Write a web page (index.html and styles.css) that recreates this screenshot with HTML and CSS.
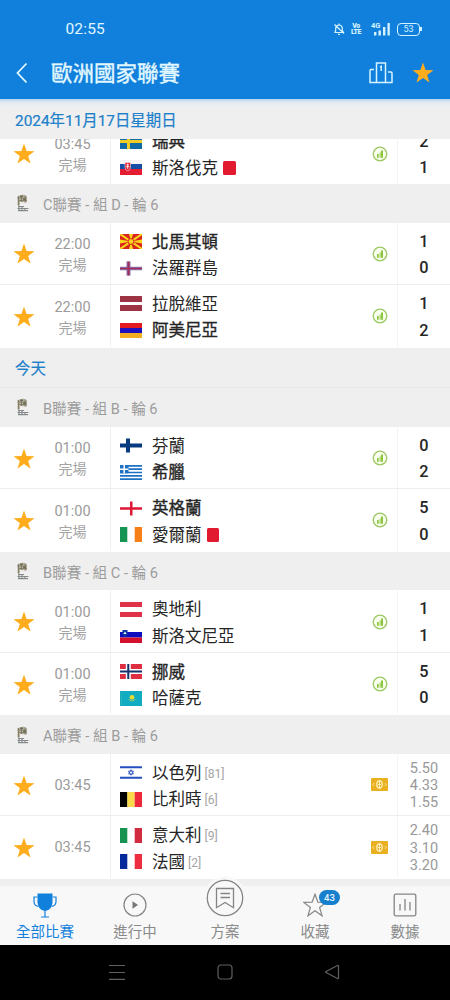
FILE: index.html
```html
<!DOCTYPE html>
<html lang="zh-Hant">
<head>
<meta charset="utf-8">
<title>歐洲國家聯賽</title>
<link rel="stylesheet" href="styles.css">
</head>
<body>
<svg class="defs" aria-hidden="true">
  <symbol id="star" viewBox="0 0 22 22"><path fill="#ffad1c" d="M11 .500l2.600 7.600 7.900.1-6.300 4.700 2.300 7.700L11 16l-6.500 4.600 2.300-7.700L.500 8.200l7.900-.1z"/></symbol>
  <symbol id="stats" viewBox="0 0 16 16"><circle cx="8" cy="8" r="6.800" fill="#f9ffef" stroke="#9cc862" stroke-width="1.300"/><path fill="#8cc63f" d="M5 8h1.700v3.700H5zM7.600 6.600h1v5.100h-1zM9 4.600h2v7.100H9z"/></symbol>
  <symbol id="odds" viewBox="0 0 17 13"><rect width="17" height="13" rx="1" fill="#e9b01f"/><ellipse cx="8.500" cy="6.500" rx="2.700" ry="3.700" fill="none" stroke="#fff2c4" stroke-width="1.300"/><path d="M8.500 2v9M7 6.500h3M3 5.200L1.800 6.500 3 7.800M14 5.200l1.200 1.300L14 7.800" fill="none" stroke="#fff2c4" stroke-width=".9"/></symbol>
  <symbol id="league" viewBox="0 0 12 18"><path fill="#b9b29c" d="M.5 2l6-1.500 3.500 1.700V8.500L3 8v3.500H.5z"/><path d="M.5 4h9M2 6.500h8M4.500 1.500v6.500M8 1.500v7M1.500 2v9.500" stroke="#7d7966" stroke-width=".9"/><path d="M1 12.500h6M.5 14.500h11M1 16.700h10M2 12v5M5 13v4M8 14v3" stroke="#868a8c" stroke-width="1.200"/><path d="M3 2.200h3M6 5.200h3" stroke="#565844"/></symbol>

  <symbol id="se" viewBox="0 0 22 15"><path fill="#126ba4" d="M0 0h22v15H0z"/><path fill="#f2cd28" d="M7 0h3v15H7zM0 6h22v3H0z"/></symbol>
  <symbol id="sk" viewBox="0 0 22 15"><path fill="#f5f5f8" d="M0 0h22v15H0z"/><path fill="#174fa7" d="M0 4h22v6H0z"/><path fill="#e41d32" d="M0 9h22v6H0z"/><path fill="#e41d32" stroke="#fff" stroke-width=".5" d="M5 2.500h5.500v5q0 2.500-2.700 3.500Q5 10 5 7.500z"/><path stroke="#fff" stroke-width=".8" d="M7.700 3.500v5.500M6.500 4.800H9M6 6.700h3.500"/></symbol>
  <symbol id="mk" viewBox="0 0 22 15"><path fill="#d9241d" d="M0 0h22v15H0z"/><path stroke="#f9d51c" stroke-width="2" d="M0 0l22 15M22 0L0 15"/><path fill="#f9d51c" d="M9 0h4l-2 7zM9 15h4l-2-7zM0 5.500v4l11-2zM22 5.500v4l-11-2z"/><circle cx="11" cy="7.500" r="2.900" fill="#f9d51c" stroke="#d9241d"/></symbol>
  <symbol id="fo" viewBox="0 0 22 15"><path fill="#fff" d="M0 0h22v15H0z"/><path fill="#8577b5" d="M6.500.5h4v14h-4zM0 5.700h22v3.600H0z"/><path fill="#a52b59" d="M7.500.5h2v14h-2zM0 6.700h22v1.600H0z"/></symbol>
  <symbol id="lv" viewBox="0 0 22 15"><path fill="#9c3445" d="M0 0h22v15H0z"/><path fill="#fff" d="M0 6h22v3H0z"/></symbol>
  <symbol id="am" viewBox="0 0 22 15"><path fill="#e31b20" d="M0 0h22v5H0z"/><path fill="#1d10bd" d="M0 5h22v5H0z"/><path fill="#f4ad20" d="M0 10h22v5H0z"/></symbol>
  <symbol id="fi" viewBox="0 0 22 15"><path fill="#fff" d="M0 0h22v15H0z"/><path fill="#073b80" d="M6 .5h4v14H6zM0 5.500h22v4H0z"/></symbol>
  <symbol id="gr" viewBox="0 0 22 15"><path fill="#fff" d="M0 0h22v15H0z"/><path stroke="#1e72c4" stroke-width="1.700" d="M0 .9h22M0 4.200h22M0 7.500h22M0 10.800h22M0 14.100h22"/><path fill="#1e72c4" d="M0 0h8.500v8.300H0z"/><path stroke="#fff" stroke-width="1.500" d="M4.200 0v8.300M0 4.200h8.500"/></symbol>
  <symbol id="en" viewBox="0 0 22 15"><path fill="#fff" d="M0 0h22v15H0z"/><path fill="#dd1734" d="M10 .5h2.500v14H10zM0 6.200h22v2.600H0z"/></symbol>
  <symbol id="ie" viewBox="0 0 22 15"><path fill="#fff" d="M0 0h22v15H0z"/><path fill="#159553" d="M0 0h7.300v15H0z"/><path fill="#f77f17" d="M14.700 0H22v15h-7.300z"/></symbol>
  <symbol id="at" viewBox="0 0 22 15"><path fill="#df3148" d="M0 0h22v15H0z"/><path fill="#fff" d="M0 5h22v5H0z"/></symbol>
  <symbol id="si" viewBox="0 0 22 15"><path fill="#fff" d="M0 0h22v15H0z"/><path fill="#0d0cbf" d="M0 4h22v5.500H0z"/><path fill="#d3102d" d="M0 9.500h22V15H0z"/><path fill="#0d32a5" d="M2.500 2h5v4.500q-1 2-2.500 2.500-1.500-.5-2.500-2.500z"/><path fill="#fff" d="M3.400 6l1.600-2.500L6.600 6z"/></symbol>
  <symbol id="no" viewBox="0 0 22 15"><path fill="#df2d42" d="M0 0h22v15H0z"/><path fill="#fff" d="M5.800 0h5v15h-5zM0 5h22v5H0z"/><path fill="#14316b" d="M7.300 0h2v15h-2zM0 6.500h22v2H0z"/></symbol>
  <symbol id="kz" viewBox="0 0 22 15"><path fill="#11acc1" d="M0 0h22v15H0z"/><circle cx="12" cy="6.300" r="2.400" fill="#e5dc38"/><path d="M8.500 8.500q3.500 3 7 0" fill="none" stroke="#b5cf60" stroke-width=".8"/><path stroke="#4bb8a4" stroke-dasharray="1 1" d="M1.500 1v13"/></symbol>
  <symbol id="il" viewBox="0 0 22 15"><path fill="#fff" d="M0 0h22v15H0z"/><path stroke="#2450bd" stroke-width="2" d="M0 2.200h22M0 12.800h22"/><path fill="none" stroke="#2450bd" stroke-width=".8" d="M11 4.700l2.500 4.200h-5zM11 10.300L8.500 6.100h5z"/></symbol>
  <symbol id="be" viewBox="0 0 22 15"><path d="M0 0h7.500v15H0z"/><path fill="#fbd94a" d="M7.300 0h7.400v15H7.300z"/><path fill="#ed2939" d="M14.700 0H22v15h-7.300z"/></symbol>
  <symbol id="it" viewBox="0 0 22 15"><path fill="#fff" d="M0 0h22v15H0z"/><path fill="#169351" d="M0 0h7.300v15H0z"/><path fill="#d12c40" d="M14.700 0H22v15h-7.300z"/></symbol>
  <symbol id="fr" viewBox="0 0 22 15"><path fill="#fff" d="M0 0h22v15H0z"/><path fill="#05289a" d="M0 0h7.300v15H0z"/><path fill="#ed2d40" d="M14.700 0H22v15h-7.300z"/></symbol>
</svg>

<div class="phone">
  <header class="top">
    <div class="status">
      <span class="clock">02:55</span>
      <div class="indicators">
        <svg width="12" height="14" viewBox="0 0 12 14" fill="none" stroke="#d5f3ff" stroke-width="1.200"><path d="M2 10.500h8.500L9.300 8.500V6Q9 3.200 6 3 3 3.200 2.700 6v2.500zM6 1.500V3M5 12.300h2M1.500 2.500l9.500 9"/></svg>
        <span class="volte"><b>Vo</b><b>LTE</b></span>
        <span class="signal"><b>4G</b><svg width="18" height="14" viewBox="0 0 18 14" fill="#d5f3ff"><path d="M2 10h2.400v3.500H2zM6.500 8.500h2.400v5H6.500zM11 5h2.400v8.500H11zM15.500 1h2.300v12.500h-2.300z"/></svg></span>
        <span class="battery">53</span>
      </div>
    </div>
    <div class="titlebar">
      <svg class="back" width="12" height="22" viewBox="0 0 12 22" fill="none" stroke="#e2f8ff" stroke-width="1.800"><path d="M10.500 1.500L1.500 11l9 9.500"/></svg>
      <h1>歐洲國家聯賽</h1>
      <svg class="podium" width="24" height="22" viewBox="0 0 24 22" fill="none" stroke="#d5f3ff" stroke-width="1.500"><path d="M7.500 20.500V1h9v19.500M5 7.500H2q-1 0-1 1v12h22V11q0-1-1-1h-3M11 5.200l1.200-.8V9"/></svg>
      <svg width="22" height="22"><use href="#star"/></svg>
    </div>
  </header>

  <main>
    <div class="date sticky">2024年11月17日星期日</div>
    <div class="clip">
      <div class="match">
        <svg class="fav"><use href="#star"/></svg>
        <div class="time"><span>03:45</span><em>完場</em></div>
        <div class="teams"><div class="team win"><svg><use href="#se"/></svg>瑞典</div><div class="team"><svg><use href="#sk"/></svg>斯洛伐克<i class="card"></i></div></div>
        <svg class="info"><use href="#stats"/></svg>
        <div class="score"><b>2</b><b>1</b></div>
      </div>
    </div>

    <div class="league"><svg><use href="#league"/></svg><span>C聯賽 - 組 D - 輪 6</span></div>
    <div class="match">
      <svg class="fav"><use href="#star"/></svg>
      <div class="time"><span>22:00</span><em>完場</em></div>
      <div class="teams"><div class="team win"><svg><use href="#mk"/></svg>北馬其頓</div><div class="team"><svg><use href="#fo"/></svg>法羅群島</div></div>
      <svg class="info"><use href="#stats"/></svg>
      <div class="score"><b>1</b><b>0</b></div>
    </div>
    <div class="match last">
      <svg class="fav"><use href="#star"/></svg>
      <div class="time"><span>22:00</span><em>完場</em></div>
      <div class="teams"><div class="team"><svg><use href="#lv"/></svg>拉脫維亞</div><div class="team win"><svg><use href="#am"/></svg>阿美尼亞</div></div>
      <svg class="info"><use href="#stats"/></svg>
      <div class="score"><b>1</b><b>2</b></div>
    </div>

    <div class="date">今天</div>

    <div class="league"><svg><use href="#league"/></svg><span>B聯賽 - 組 B - 輪 6</span></div>
    <div class="match">
      <svg class="fav"><use href="#star"/></svg>
      <div class="time"><span>01:00</span><em>完場</em></div>
      <div class="teams"><div class="team"><svg><use href="#fi"/></svg>芬蘭</div><div class="team win"><svg><use href="#gr"/></svg>希臘</div></div>
      <svg class="info"><use href="#stats"/></svg>
      <div class="score"><b>0</b><b>2</b></div>
    </div>
    <div class="match last">
      <svg class="fav"><use href="#star"/></svg>
      <div class="time"><span>01:00</span><em>完場</em></div>
      <div class="teams"><div class="team win"><svg><use href="#en"/></svg>英格蘭</div><div class="team"><svg><use href="#ie"/></svg>愛爾蘭<i class="card"></i></div></div>
      <svg class="info"><use href="#stats"/></svg>
      <div class="score"><b>5</b><b>0</b></div>
    </div>

    <div class="league"><svg><use href="#league"/></svg><span>B聯賽 - 組 C - 輪 6</span></div>
    <div class="match">
      <svg class="fav"><use href="#star"/></svg>
      <div class="time"><span>01:00</span><em>完場</em></div>
      <div class="teams"><div class="team"><svg><use href="#at"/></svg>奧地利</div><div class="team"><svg><use href="#si"/></svg>斯洛文尼亞</div></div>
      <svg class="info"><use href="#stats"/></svg>
      <div class="score"><b>1</b><b>1</b></div>
    </div>
    <div class="match last">
      <svg class="fav"><use href="#star"/></svg>
      <div class="time"><span>01:00</span><em>完場</em></div>
      <div class="teams"><div class="team win"><svg><use href="#no"/></svg>挪威</div><div class="team"><svg><use href="#kz"/></svg>哈薩克</div></div>
      <svg class="info"><use href="#stats"/></svg>
      <div class="score"><b>5</b><b>0</b></div>
    </div>

    <div class="league"><svg><use href="#league"/></svg><span>A聯賽 - 組 B - 輪 6</span></div>
    <div class="match">
      <svg class="fav"><use href="#star"/></svg>
      <div class="time"><span>03:45</span></div>
      <div class="teams"><div class="team"><svg><use href="#il"/></svg>以色列<small>[81]</small></div><div class="team"><svg><use href="#be"/></svg>比利時<small>[6]</small></div></div>
      <svg class="money"><use href="#odds"/></svg>
      <div class="prices"><span>5.50</span><span>4.33</span><span>1.55</span></div>
    </div>
    <div class="match last">
      <svg class="fav"><use href="#star"/></svg>
      <div class="time"><span>03:45</span></div>
      <div class="teams"><div class="team"><svg><use href="#it"/></svg>意大利<small>[9]</small></div><div class="team"><svg><use href="#fr"/></svg>法國<small>[2]</small></div></div>
      <svg class="money"><use href="#odds"/></svg>
      <div class="prices"><span>2.40</span><span>3.10</span><span>3.20</span></div>
    </div>
  </main>

  <nav class="tabs">
    <a class="tab active">
      <svg width="24" height="25" viewBox="0 0 24 25"><path fill="#1180dc" d="M4.500.5h15v9q-.5 6-5.500 8-2 .7-4 0-5-2-5.500-8z"/><path fill="none" stroke="#1180dc" stroke-width="1.200" d="M4.500 4H1v5q.5 4 4.500 4.500M19.500 4H23v5q-.5 4-4.500 4.500M12 17v6.500M8 24h8"/></svg>
      <span>全部比賽</span>
    </a>
    <a class="tab">
      <svg width="24" height="25" viewBox="0 0 24 25"><circle cx="12" cy="12" r="11" fill="none" stroke="#858585" stroke-width="1.200"/><path fill="#777" d="M9.500 8.300l5.500 3.700-5.500 3.700z"/></svg>
      <span>進行中</span>
    </a>
    <a class="tab plan">
      <svg width="44" height="44" viewBox="0 0 44 44" fill="none" stroke="#858585" stroke-width="1.300"><circle cx="22" cy="22" r="21.500" fill="#f8f8f8" stroke="none"/><circle cx="22" cy="22" r="17.700"/><path d="M13.500 12.500h17v19.200L22 26.500l-8.500 5.200zM17.500 17.500h9.500M17.500 21.500h9.500"/></svg>
      <span>方案</span>
    </a>
    <a class="tab">
      <svg width="24" height="25" viewBox="0 0 24 25" fill="none" stroke="#858585" stroke-width="1.200"><path d="M12 1.200l2.900 8 8.300.2-6.600 5.100 2.400 8.200-7-4.900-7 4.900 2.400-8.200L.8 9.400l8.300-.2z"/></svg>
      <b class="badge">43</b>
      <span>收藏</span>
    </a>
    <a class="tab">
      <svg width="24" height="25" viewBox="0 0 24 25" fill="none" stroke="#858585" stroke-width="1.300"><rect x="1.200" y="1.200" width="21.600" height="21.600" rx="1.500"/><path d="M7 11v6.500M12 6v11.500M17 9v8.500"/></svg>
      <span>數據</span>
    </a>
  </nav>

  <footer class="system">
    <svg width="16" height="16" viewBox="0 0 16 16"><path d="M0 1.500h16M0 8.500h16M0 15.300h16"/></svg>
    <svg width="16" height="16" viewBox="0 0 16 16"><rect x="1" y="1" width="14" height="14" rx="3"/></svg>
    <svg width="16" height="16" viewBox="0 0 16 16"><path d="M14.500 2v12q0 1-1 .5L2 8.500q-1-.5 0-1L13.500 1.500q1-.5 1 .5z"/></svg>
  </footer>
</div>
</body>
</html>
```

FILE: styles.css
```css
* { box-sizing: border-box; }

body {
  margin: 0;
  background: #efefef;
  font-family: Roboto, "Noto Sans CJK TC", sans-serif;
  color: #252525;
}

.defs { position: absolute; width: 0; height: 0; }

.phone {
  width: 450px;
  height: 1000px;
  display: flex;
  flex-direction: column;
  overflow: hidden;
}

.phone svg { display: block; flex: none; }

/* header */
.top {
  height: 99px;
  flex: none;
  background: #1180dc;
  color: #e2f8ff;
  padding-top: 18px;
}

.status {
  height: 22px;
  display: flex;
  align-items: center;
  justify-content: space-between;
  padding: 0 30px 0 65.5px;
}

.clock { font-size: 15.5px; letter-spacing: .15px; }

.indicators { display: flex; align-items: center; color: #d5f3ff; }

.volte {
  display: flex;
  flex-direction: column;
  align-items: center;
  width: 10px;
  margin-left: 6px;
  font-size: 7px;
  line-height: 6.5px;
  letter-spacing: -.5px;
}

.volte b { font-weight: 900; }

.signal { display: flex; margin-left: 10px; }
.signal b { font-size: 7.5px; line-height: 8px; width: 1px; white-space: nowrap; }

.battery {
  position: relative;
  width: 23px;
  height: 13px;
  margin-left: 7px;
  border: 1.3px solid #d5f3ff;
  border-radius: 4px;
  font-size: 9px;
  line-height: 11px;
  text-align: center;
}

.battery::after {
  content: "";
  position: absolute;
  right: -3px;
  top: 3.5px;
  width: 2px;
  height: 4px;
  background: #d5f3ff;
}

.titlebar {
  height: 44px;
  margin-top: 11px;
  display: flex;
  align-items: center;
  padding: 0 16.5px 0 16px;
}

.titlebar h1 {
  margin: 2px auto 0 23px;
  font-size: 21.5px;
  line-height: 30px;
  font-weight: 400;
  -webkit-text-stroke: .4px currentColor;
}

.podium { margin-right: 18.5px; }

/* match list */
main { flex: none; height: 787px; }

.date {
  height: 40.5px;
  padding-left: 15px;
  display: flex;
  align-items: center;
  color: #1d80ca;
  font-size: 15.4px;
  -webkit-text-stroke: .2px currentColor;
  border-bottom: 1px solid #e9e9e9;
}

.sticky {
  height: 40px;
  padding-bottom: 1px;
  border: 0;
  background: linear-gradient(#b7d5ed 0, #e6edf2 4px, #efefef 9px);
}

.clip {
  height: 45px;
  display: flex;
  flex-direction: column;
  justify-content: flex-end;
  overflow: hidden;
}

.clip .match { margin-bottom: -1px; }

.league {
  height: 38.8px;
  display: flex;
  align-items: center;
  gap: 14px;
  padding: 0 0 0 17px;
  color: #9c9c9c;
  font-size: 14.6px;
}

.league svg { width: 12px; height: 18px; }

.match {
  height: 62.4px;
  flex: none;
  display: grid;
  grid-template-columns: 48px 63px 250px 36px 53px;
  background: #fff;
  border-bottom: 1px solid #ededed;
}

.match.last, .clip .match { border-bottom-color: #fff; }

.fav { width: 22px; height: 22px; place-self: center; margin-top: 2px; }

.time {
  display: flex;
  flex-direction: column;
  align-items: center;
  justify-content: center;
  padding: 2px 13px 0 0;
  color: #9b9b9b;
  font-size: 14.5px;
  line-height: 20px;
  border-right: 1px solid #f0f0f0;
}

.time span:not(:last-child) { padding-top: 1.5px; }
.time em { font-style: normal; font-size: 14px; color: #a3a3a3; }

.teams { padding: 6.5px 0 0 9px; }

.team {
  height: 26.5px;
  display: flex;
  align-items: center;
  font-size: 16.5px;
  line-height: 26px;
}

.team svg { width: 22px; height: 15px; margin: -2px 10px 0 0; }
.win { -webkit-text-stroke: .35px currentColor; }
.team small { margin-left: 3px; color: #a5a5a5; font-size: 12.1px; }

.card {
  width: 12.5px;
  height: 14px;
  margin: -1px 0 0 5px;
  border-radius: 1.5px;
  background: #e11a30;
}

.info { width: 16px; height: 16px; align-self: center; margin: 1px 0 0 11px; }
.money { width: 17px; height: 13px; align-self: center; margin: 0 0 0 9.5px; }

.score, .prices {
  display: flex;
  flex-direction: column;
  align-items: center;
  border-left: 1px solid #f4f4f4;
}

.score { padding-top: 6px; }
.score b { font-size: 16.3px; font-weight: 500; line-height: 26.5px; }

.prices {
  justify-content: center;
  padding-top: 2px;
  color: #999;
  font-size: 14.5px;
  line-height: 17.2px;
}

/* bottom tabs */
.tabs {
  height: 59px;
  flex: none;
  display: grid;
  grid-template-columns: repeat(5, 90px);
  grid-template-rows: 59px;
  background: #f8f8f8;
}

.tab {
  position: relative;
  display: flex;
  flex-direction: column;
  align-items: center;
  justify-content: flex-end;
  padding-bottom: 1px;
  color: #8a8a8a;
  font-size: 14.5px;
  line-height: 22px;
}

.tab svg { margin-bottom: 4px; }
.tab.active { color: #1180dc; }
.tab.plan svg { margin-bottom: 2.5px; }

.badge {
  position: absolute;
  left: 49px;
  top: 4px;
  width: 21px;
  height: 15px;
  border-radius: 8px;
  background: #167fce;
  color: #e6f7ff;
  font-size: 9.5px;
  font-weight: 500;
  line-height: 15px;
  text-align: center;
}

/* system navigation */
.system {
  height: 55px;
  flex: none;
  display: flex;
  justify-content: space-between;
  padding: 19px 110px 0 109px;
  background: #000;
}

.system svg { fill: none; stroke: #606060; stroke-width: 1.2; }
```
